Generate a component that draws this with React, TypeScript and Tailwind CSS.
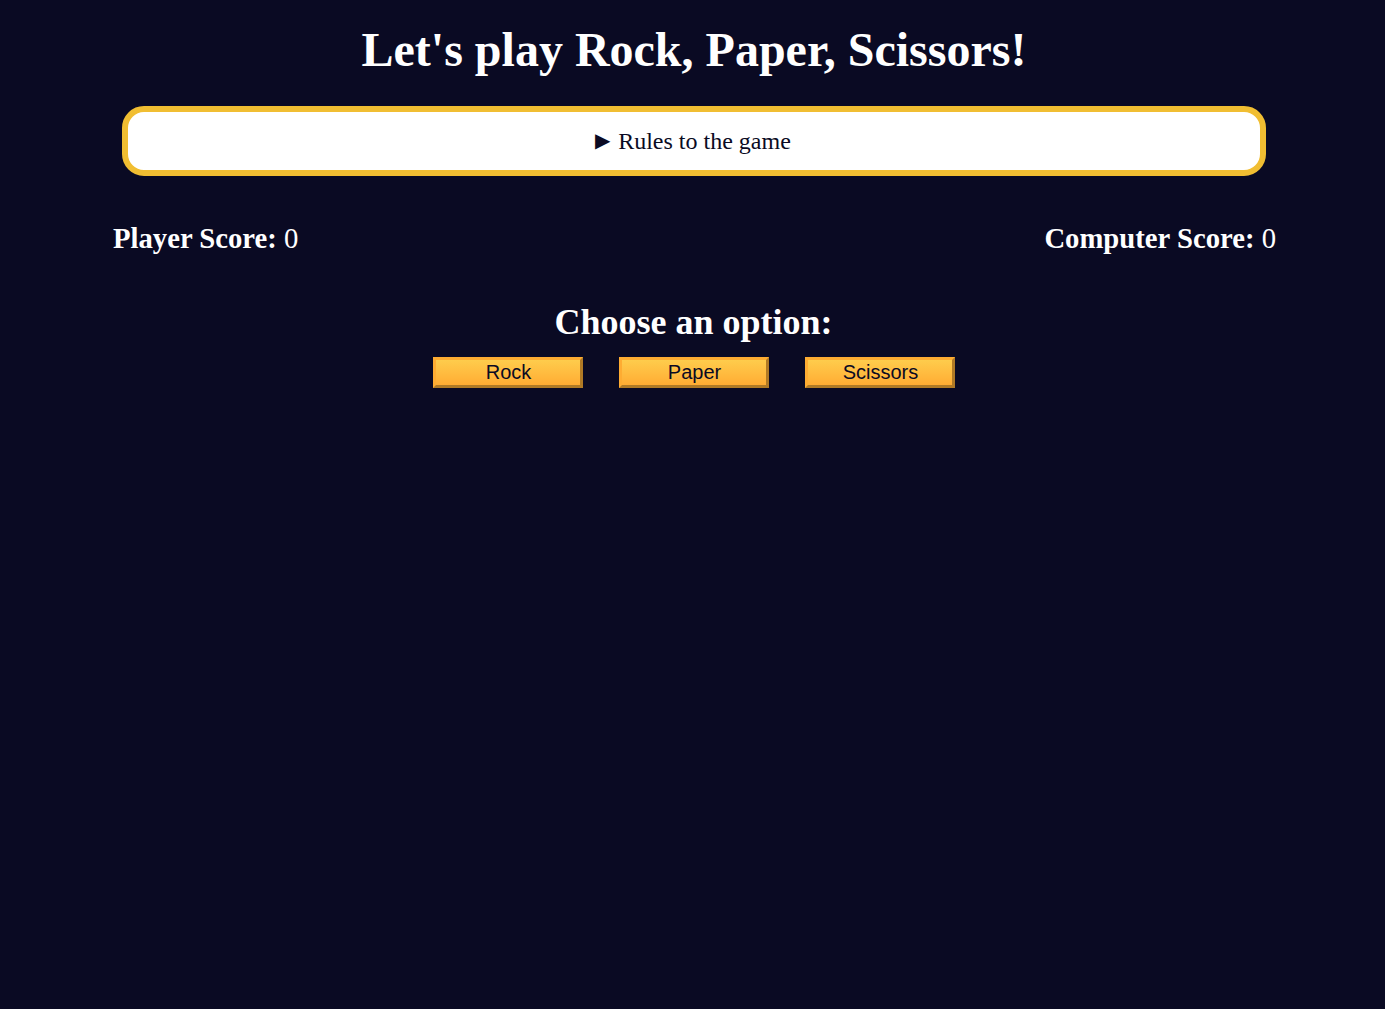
const options = ["Rock", "Paper", "Scissors"];

export default function App() {
  return (
    <div className="min-h-[1009px] bg-[#0a0a23] text-center text-white font-['Liberation_Serif',serif]">
      <h1 className="pt-[22px] pl-[3px] text-[48px] font-bold leading-[56px]">Let's play Rock, Paper, Scissors!</h1>

      <div className="ml-[122px] mr-[119px] mt-[28px] h-[70px] rounded-[22px] border-[6px] border-[#f1be32] bg-white text-[#0a0a23] flex items-center justify-center">
        <p className="text-[24px] pr-[2px]">
          <span className="mr-[8px] text-[20px] align-[2px]">▶</span>Rules to the game
        </p>
      </div>

      <div className="mt-[45px] pl-[113px] pr-[109px] flex justify-between text-[28.7px] leading-[34px]">
        <p><span className="font-bold">Player Score:</span> 0</p>
        <p><span className="font-bold">Computer Score:</span> 0</p>
      </div>

      <h2 className="mt-[47px] pl-[2px] text-[36px] font-bold leading-[40px]">Choose an option:</h2>

      <div className="mt-[15px] pl-[2px] flex justify-center gap-[36px]">
        {options.map((o) => (
          <button
            key={o}
            type="button"
            className="w-[150px] h-[31px] pb-[2px] pl-[2px] border-[3px] border-t-[#feac32] border-l-[#feac32] border-r-[#b07a25] border-b-[#b07a25] bg-gradient-to-b from-[#fecc4c] to-[#ffac33] text-[#0a0a23] text-[20px] leading-none font-['Liberation_Sans',sans-serif]"
          >
            {o}
          </button>
        ))}
      </div>
    </div>
  );
}
